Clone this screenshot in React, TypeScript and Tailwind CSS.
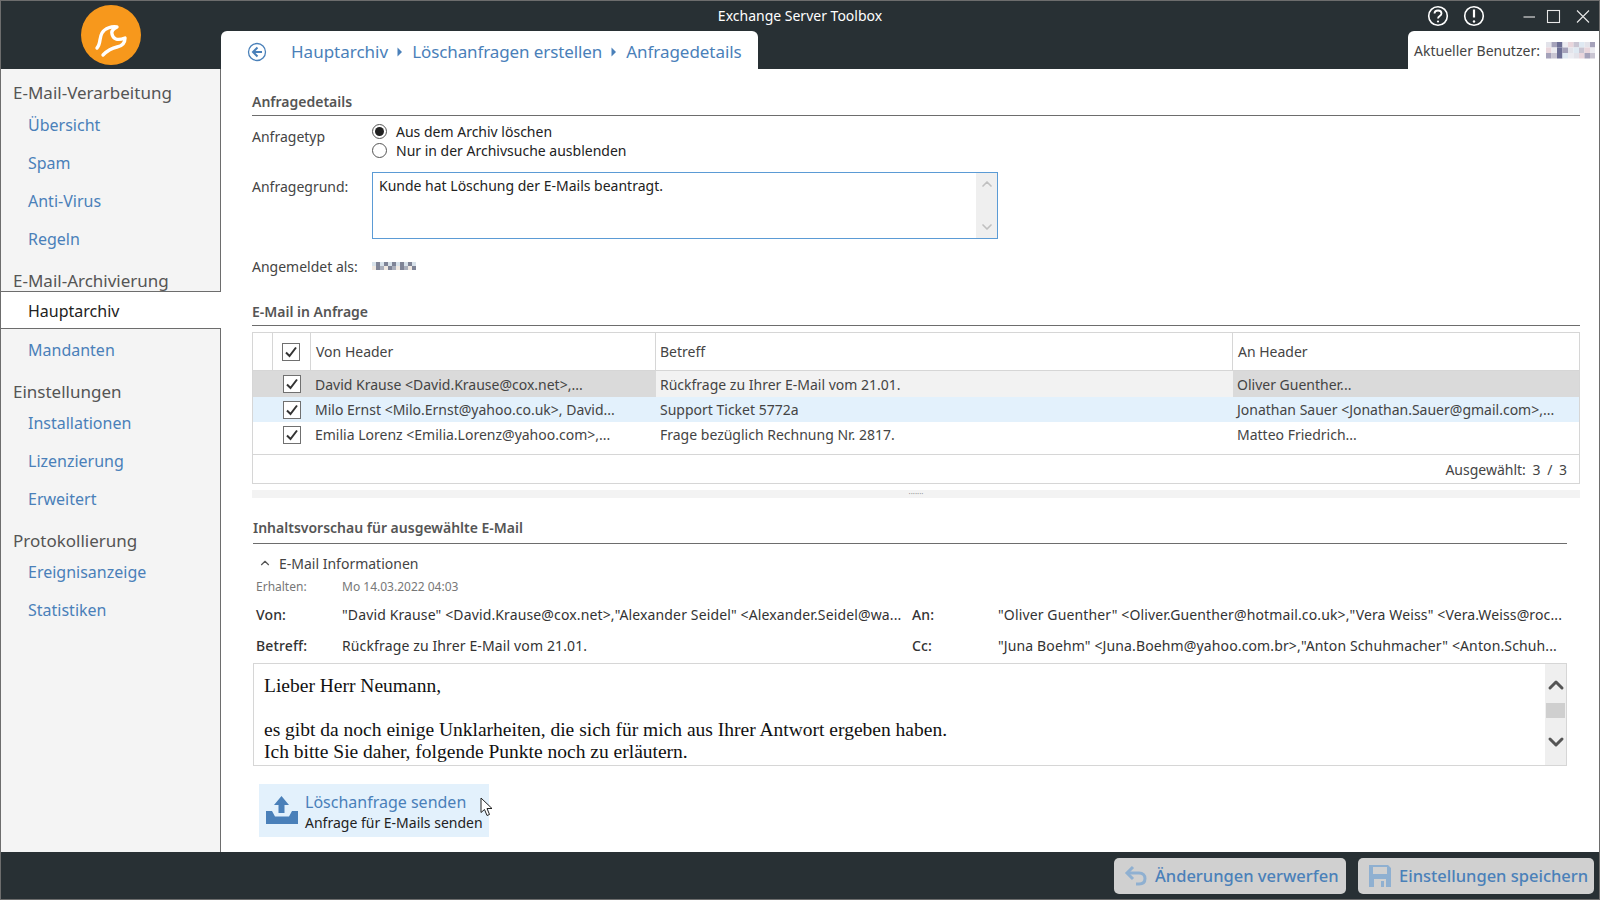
import { ChevronDown, ChevronUp } from "lucide-react";

const blueText = "text-[#4a80b9]";

interface NavGroup {
  title: string;
  items: string[];
}

const navGroups: NavGroup[] = [
  { title: "E-Mail-Verarbeitung", items: ["Übersicht", "Spam", "Anti-Virus", "Regeln"] },
  { title: "E-Mail-Archivierung", items: ["Hauptarchiv", "Mandanten"] },
  { title: "Einstellungen", items: ["Installationen", "Lizenzierung", "Erweitert"] },
  { title: "Protokollierung", items: ["Ereignisanzeige", "Statistiken"] },
];

const mails = [
  {
    from: "David Krause <David.Krause@cox.net>,...",
    subject: "Rückfrage zu Ihrer E-Mail vom 21.01.",
    to: "Oliver Guenther...",
    row: "h-[26px] bg-[#f2f2f2]",
    edge: "bg-[#dadada]",
  },
  {
    from: "Milo Ernst <Milo.Ernst@yahoo.co.uk>, David...",
    subject: "Support Ticket 5772a",
    to: "Jonathan Sauer <Jonathan.Sauer@gmail.com>,...",
    row: "h-[25px] bg-[#e3f1fc]",
    edge: "",
  },
  {
    from: "Emilia Lorenz <Emilia.Lorenz@yahoo.com>,...",
    subject: "Frage bezüglich Rechnung Nr. 2817.",
    to: "Matteo Friedrich...",
    row: "h-[25px] bg-white",
    edge: "",
  },
];

function Logo() {
  return (
    <svg width="60" height="60" viewBox="0 0 60 60" className="shrink-0">
      <circle cx="30" cy="30" r="30" fill="#f7981c" />
      <path
        d="M16 43C20 39 18 33 21 28C24 23 31 21 36 22C32 24 30 26 31 29C32 34 36 36 44 33C44 38 41 41 36 42C31 43 27 45 22 50"
        fill="none"
        stroke="white"
        strokeWidth="3.4"
        strokeLinecap="round"
        strokeLinejoin="round"
      />
    </svg>
  );
}

// pixelated patches where the names were blurred out in the screenshot
function Blurred({ cols, rows, px, colors }: { cols: number; rows: number; px: number; colors: string[] }) {
  const cells = [];
  for (let y = 0; y < rows; y++) {
    for (let x = 0; x < cols; x++) {
      cells.push(
        <rect key={`${x}-${y}`} x={x * px} y={y * px} width={px} height={px} fill={colors[(x * 3 + y * 5 + x * y) % colors.length]} />
      );
    }
  }
  return (
    <svg width={cols * px} height={rows * px} className="shrink-0">
      {cells}
    </svg>
  );
}

function Check() {
  return (
    <svg width="18" height="18" viewBox="0 0 18 18">
      <rect x="0.5" y="0.5" width="17" height="17" fill="white" stroke="#707070" />
      <path d="M4 9.5L7.5 13L14 4.5" fill="none" stroke="#333" strokeWidth="2" />
    </svg>
  );
}

function Radio({ checked }: { checked: boolean }) {
  return (
    <span className="flex h-[15px] w-[15px] items-center justify-center rounded-full border border-[#555] bg-white">
      {checked && <span className="h-[9px] w-[9px] rounded-full bg-[#222]" />}
    </span>
  );
}

function SectionTitle({ children, className }: { children: string; className: string }) {
  return <div className={`border-b border-[#6d6d6d] text-[14px] font-semibold text-[#555] ${className}`}>{children}</div>;
}

function Sidebar() {
  return (
    <aside className="flex w-[220px] shrink-0 flex-col border-r border-[#6d6d6d] bg-[#f4f4f4] pt-[8px]">
      {navGroups.map((group, i) => (
        <div key={group.title} className={i > 0 ? "mt-[7px]" : ""}>
          <div className={`pl-[12px] text-[17px] leading-[32px] text-[#555] ${i === 1 ? "h-[26px]" : i === 0 ? "h-[29px]" : "h-[28px]"}`}>
            {group.title}
          </div>
          {group.items.map((item) =>
            item === "Hauptarchiv" ? (
              <div key={item} className="-mr-px mb-[2px] flex h-[38px] items-center border-y border-[#6d6d6d] bg-white pl-[27px] pt-[2px] text-[16px] text-[#222]">
                {item}
              </div>
            ) : (
              <div key={item} className={`flex h-[38px] items-center pl-[27px] text-[16px] ${blueText}`}>
                {item}
              </div>
            )
          )}
        </div>
      ))}
    </aside>
  );
}

function Triangle() {
  return (
    <svg width="24" height="12" viewBox="0 0 24 12" className="shrink-0">
      <path d="M9.5 1.5L14 6L9.5 10.5Z" fill="#4a80b9" />
    </svg>
  );
}

function Header() {
  return (
    <header className="flex h-[68px] shrink-0 bg-[#283034]">
      <div className="flex w-[220px] shrink-0 justify-center pt-[4px]">
        <Logo />
      </div>
      <div className="flex min-w-0 flex-1 flex-col">
        <div className="flex h-[30px] items-center">
          <div className="w-[1158px] pb-[2px] text-center text-[14px] text-white">Exchange Server Toolbox</div>
          <svg width="140" height="30" viewBox="0 0 140 30" className="shrink-0" fill="none" stroke="white">
            <circle cx="59" cy="15" r="9.3" strokeWidth="1.6" />
            <path d="M55.5 12.5C55.5 8.5 62.5 8.5 62.5 12.5C62.5 15 59 15 59 17.5" strokeWidth="1.8" />
            <circle cx="59" cy="20.5" r="1.1" fill="white" stroke="none" />
            <circle cx="95" cy="15" r="9.3" strokeWidth="1.6" />
            <path d="M95 8.5V16.5" strokeWidth="2.2" />
            <circle cx="95" cy="20.5" r="1.2" fill="white" stroke="none" />
          </svg>
          <svg width="80" height="30" viewBox="0 0 80 30" className="shrink-0" fill="none" stroke="#e8e8e8" strokeWidth="1.1">
            <path d="M4.5 16H16" />
            <rect x="28.5" y="9.5" width="12" height="12" />
            <path d="M58 9.5L70 21.5M70 9.5L58 21.5" />
          </svg>
        </div>
        <div className="flex h-[38px] items-stretch justify-between">
          <div className="flex w-[537px] items-center rounded-t-[6px] bg-white pl-[26px] pt-[3px]">
            <svg width="20" height="20" viewBox="0 0 20 20" fill="none" stroke="#4a80b9" className="mr-[24px] shrink-0">
              <circle cx="10" cy="10" r="8.5" strokeWidth="1.3" />
              <path d="M10.5 5.5L6 10L10.5 14.5M6 10H15" strokeWidth="2" />
            </svg>
            <span className={`text-[17px] ${blueText}`}>Hauptarchiv</span>
            <Triangle />
            <span className={`text-[17px] tracking-[-0.1px] ${blueText}`}>Löschanfragen erstellen</span>
            <Triangle />
            <span className={`text-[17px] tracking-[-0.05px] ${blueText}`}>Anfragedetails</span>
          </div>
          <div className="flex w-[191px] items-center gap-[6px] rounded-tl-[6px] bg-white pl-[6px] pt-[1px] text-[14px] text-[#444]">
            <span>Aktueller Benutzer:</span>
            <Blurred cols={9} rows={3} px={5.5} colors={["#e3e3ea", "#c9c5d2", "#ececf1", "#a5a2ba", "#dfe9f2", "#e9d6dc", "#6d6f95"]} />
          </div>
        </div>
      </div>
    </header>
  );
}

function RequestDetails() {
  return (
    <section>
      <SectionTitle className="h-[24px] leading-[20px]">Anfragedetails</SectionTitle>
      <div className="flex pt-[6px]">
        <div className="w-[120px] pt-[4px] text-[14px] text-[#444]">Anfragetyp</div>
        <div className="flex flex-col text-[14px] text-[#222]">
          <label className="flex h-[19px] items-center gap-[9px]">
            <Radio checked />
            Aus dem Archiv löschen
          </label>
          <label className="flex h-[19px] items-center gap-[9px]">
            <Radio checked={false} />
            Nur in der Archivsuche ausblenden
          </label>
        </div>
      </div>
      <div className="mt-[12px] flex">
        <div className="w-[120px] pt-[4px] text-[14px] text-[#444]">Anfragegrund:</div>
        <div className="flex h-[67px] w-[626px] border border-[#5b9bd5] bg-white">
          <div className="flex-1 px-[6px] pt-[2px] text-[14px] text-[#222]">Kunde hat Löschung der E-Mails beantragt.</div>
          <div className="flex w-[21px] flex-col items-center justify-between bg-[#efefef] py-[3px] text-[#c0c0c0]">
            <ChevronUp size={16} strokeWidth={2.5} />
            <ChevronDown size={16} strokeWidth={2.5} />
          </div>
        </div>
      </div>
      <div className="mt-[16px] flex h-[22px] items-center">
        <div className="w-[120px] text-[14px] text-[#444]">Angemeldet als:</div>
        <Blurred cols={11} rows={2} px={4} colors={["#d8e2ea", "#a9aebb", "#e6e6ea", "#7f8496", "#c9ccd4", "#f0e9e2"]} />
      </div>
    </section>
  );
}

function MailTable() {
  const cols = "grid grid-cols-[20px_38px_345px_577px_1fr]";
  return (
    <section className="mt-[24px]">
      <SectionTitle className="h-[25px] leading-[22px]">E-Mail in Anfrage</SectionTitle>
      <div className="mt-[6px] border border-[#d6d6d6] text-[14px] text-[#444]">
        <div className={`${cols} h-[38px] border-b border-[#d6d6d6] bg-white`}>
          <div className="border-r border-[#d6d6d6]" />
          <div className="flex items-center justify-center border-r border-[#d6d6d6] pr-[1px]">
            <Check />
          </div>
          <div className="flex items-center border-r border-[#d6d6d6] pl-[5px]">Von Header</div>
          <div className="flex items-center border-r border-[#d6d6d6] pl-[4px]">Betreff</div>
          <div className="flex items-center pl-[5px]">An Header</div>
        </div>
        {mails.map((mail) => (
          <div key={mail.subject} className={`${cols} ${mail.row}`}>
            <div className={`col-span-3 grid grid-cols-[20px_38px_345px] items-center ${mail.edge}`}>
              <div />
              <div className="flex justify-center">
                <Check />
              </div>
              <div className="truncate pl-[4px]">{mail.from}</div>
            </div>
            <div className="flex items-center pl-[4px]">{mail.subject}</div>
            <div className={`flex items-center pl-[4px] ${mail.edge}`}>{mail.to}</div>
          </div>
        ))}
        <div className="h-[8px] border-b border-[#d6d6d6]" />
        <div className="flex h-[28px] items-center justify-end pr-[12px] [word-spacing:3px]">Ausgewählt: 3 / 3</div>
      </div>
      <div className="mt-[6px] flex h-[8px] items-center justify-center bg-[#f3f3f3]">
        <span className="text-[8px] leading-none text-[#999]">·······</span>
      </div>
    </section>
  );
}

function Preview() {
  return (
    <section className="ml-[1px] mt-[20px] w-[1314px]">
      <SectionTitle className="h-[26px] leading-[20px]">Inhaltsvorschau für ausgewählte E-Mail</SectionTitle>
      <div className="mt-[9px] flex h-[20px] items-center text-[14px] text-[#444]">
        <ChevronUp size={14} className="ml-[5px] mr-[7px] text-[#555]" />
        E-Mail Informationen
      </div>
      <div className="mt-[6px] flex h-[16px] items-center pl-[3px] text-[12px] text-[#777]">
        <span className="w-[86px]">Erhalten:</span>
        <span>Mo 14.03.2022 04:03</span>
      </div>
      <div className="mt-[4px] grid grid-cols-[86px_570px_86px_1fr] items-center pl-[3px] text-[14px] tracking-[0.13px] text-[#333]">
        <span className="h-[31px] font-medium leading-[31px]">Von:</span>
        <span className="truncate">"David Krause" &lt;David.Krause@cox.net&gt;,"Alexander Seidel" &lt;Alexander.Seidel@wa...</span>
        <span className="font-medium">An:</span>
        <span className="truncate">"Oliver Guenther" &lt;Oliver.Guenther@hotmail.co.uk&gt;,"Vera Weiss" &lt;Vera.Weiss@roc...</span>
        <span className="h-[31px] font-medium leading-[31px]">Betreff:</span>
        <span className="truncate">Rückfrage zu Ihrer E-Mail vom 21.01.</span>
        <span className="font-medium">Cc:</span>
        <span className="truncate">"Juna Boehm" &lt;Juna.Boehm@yahoo.com.br&gt;,"Anton Schuhmacher" &lt;Anton.Schuh...</span>
      </div>
      <div className="mt-[2px] flex h-[103px] border border-[#d6d6d6]">
        <div className="flex-1 pl-[10px] pt-[11px] font-[Liberation_Serif,serif] text-[19.5px] leading-[22px] text-[#111]">
          <p>Lieber Herr Neumann,</p>
          <p>&nbsp;</p>
          <p>es gibt da noch einige Unklarheiten, die sich für mich aus Ihrer Antwort ergeben haben.</p>
          <p>Ich bitte Sie daher, folgende Punkte noch zu erläutern.</p>
        </div>
        <div className="flex w-[21px] flex-col items-center bg-[#efefef] text-[#555]">
          <ChevronUp size={24} strokeWidth={3} className="mt-[9px]" />
          <div className="mt-[6px] h-[15px] w-[19px] bg-[#cfcfcf]" />
          <ChevronDown size={24} strokeWidth={3} className="mt-[12px]" />
        </div>
      </div>
    </section>
  );
}

function SendButton() {
  return (
    <div className="relative ml-[7px] mt-[18px] flex h-[53px] w-[230px] items-center bg-[#e3f1fc] pl-[7px]">
      <svg width="32" height="30" viewBox="0 0 32 30" className="mr-[7px] shrink-0" fill="#4a80b9">
        <path d="M15.5 0L23 9H18.5V17H12.5V9H8Z" />
        <path d="M0 15H6L9 20.5H23L26 15H32V28H0Z" />
      </svg>
      <div className="flex flex-col">
        <span className={`text-[16px] leading-[24px] ${blueText}`}>Löschanfrage senden</span>
        <span className="text-[14px] leading-[18px] text-[#222]">Anfrage für E-Mails senden</span>
      </div>
      <svg width="14" height="20" viewBox="0 0 14 20" className="absolute left-[221px] top-[13px]">
        <path d="M1 1V15.5L4.5 12.5L7 18.5L9.5 17.5L7 11.5H12Z" fill="white" stroke="#222" strokeWidth="1" />
      </svg>
    </div>
  );
}

function Footer() {
  return (
    <footer className="flex h-[47px] shrink-0 items-center justify-end gap-[12px] bg-[#283034] pr-[5px]">
      <button className={`flex h-[36px] w-[232px] items-center whitespace-nowrap rounded-[5px] bg-[#d0d0d0] pl-[10px] pt-[1px] text-[16.5px] font-medium ${blueText}`}>
        <svg width="24" height="24" viewBox="0 0 24 24" fill="none" stroke="#8fb0d1" strokeWidth="3" className="mr-[7px] shrink-0">
          <path d="M9 3L3 9L9 15" />
          <path d="M3 9H15C19 9 21 11.5 21 14.5C21 18 19 20 15 20H12" />
        </svg>
        Änderungen verwerfen
      </button>
      <button className={`flex h-[36px] w-[236px] items-center whitespace-nowrap rounded-[5px] bg-[#d0d0d0] pl-[10px] pt-[1px] text-[16.5px] font-medium ${blueText}`}>
        <svg width="24" height="24" viewBox="0 0 24 24" fill="#8fb0d1" className="mr-[7px] shrink-0">
          <path d="M1 1H20L23 4V23H1ZM5 3V10H19V3ZM6 15V23H18V15ZM13 17H16V23H13Z" fillRule="evenodd" />
        </svg>
        Einstellungen speichern
      </button>
    </footer>
  );
}

export default function App() {
  return (
    <div className="flex h-[900px] w-[1600px] flex-col overflow-hidden border border-[#6d6d6d] bg-white font-[Noto_Sans,sans-serif]">
      <Header />
      <div className="flex min-h-0 flex-1">
        <Sidebar />
        <main className="min-w-0 flex-1 pl-[31px] pr-[19px] pt-[23px]">
          <RequestDetails />
          <MailTable />
          <Preview />
          <SendButton />
        </main>
      </div>
      <Footer />
    </div>
  );
}
